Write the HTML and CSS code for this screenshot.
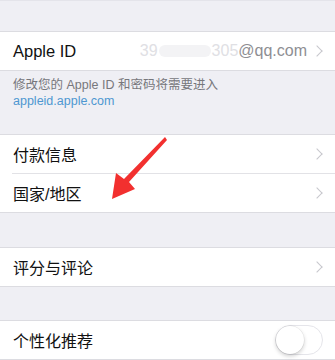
FILE: index.html
```html
<!DOCTYPE html>
<html lang="zh-CN">
<head>
    <meta charset="UTF-8">
    <meta name="viewport" content="width=device-width, initial-scale=1.0">
    <title>Apple ID 设置</title>
    <link rel="stylesheet" href="styles.css">
</head>
<body>

    <div class="page">
        <div class="gap-top"></div>

        <div class="group">
            <div class="cell">
                <span class="label latin">Apple ID</span>
                <span class="value">
                    <span class="hidden-part">39</span><span class="blur"></span><span class="hidden-part">305</span>@qq.com
                </span>
                <span class="chevron"></span>
            </div>
        </div>

        <div class="note">
            <p>修改您的 Apple ID 和密码将需要进入</p>
            <p class="link">appleid.apple.com</p>
        </div>

        <div class="group">
            <div class="cell">
                <span class="label">付款信息</span>
                <span class="chevron"></span>
            </div>
            <div class="cell">
                <span class="label">国家/地区</span>
                <span class="chevron"></span>
            </div>
        </div>

        <div class="gap gap-wide"></div>

        <div class="group">
            <div class="cell">
                <span class="label">评分与评论</span>
                <span class="chevron"></span>
            </div>
        </div>

        <div class="gap"></div>

        <div class="group">
            <div class="cell">
                <span class="label">个性化推荐</span>
                <span class="toggle"><span class="knob"></span></span>
            </div>
        </div>

        <!-- red annotation arrow drawn over the list -->
        <svg class="arrow" width="335" height="360" viewBox="0 0 335 360">
            <path d="M165 137 L167 140 L129 182 L135 189 L112 199 L116 173 L124 179 Z" fill="#f2302f"/>
        </svg>
    </div>

</body>
</html>
```

FILE: styles.css
```css
* {
    margin: 0;
    padding: 0;
    box-sizing: border-box;
}

body {
    font-family: 'Liberation Sans', 'Noto Sans CJK SC', sans-serif;
    background-color: #efeff4;
    color: #111;
    width: 335px;
    height: 360px;
    overflow: hidden;
}

.page {
    position: relative;
}

.gap-top {
    height: 31px;
    border-top: 1px solid #e4e4ea;
}

.gap {
    height: 33px;
}

.gap-wide {
    height: 34px;
}

.group {
    background: #fff;
    border-top: 1px solid #dcdce1;
    border-bottom: 1px solid #dcdce1;
}

.cell {
    display: flex;
    align-items: center;
    height: 38px;
    padding: 0 12px 0 13px;
    position: relative;
}

/* thin line between cells, inset like iOS */
.cell + .cell {
    height: 39px;
    border-top: 1px solid #e2e2e6;
    margin-left: 12px;
    padding-left: 1px;
}

.label {
    flex: 1;
    font-size: 16px;
}

.label.latin {
    font-size: 16.5px;
}

.value {
    font-size: 16px;
    color: #8e8e93;
    margin-right: 6px;
    display: flex;
    align-items: center;
}

.hidden-part {
    color: #e0e0e4;
}

.blur {
    display: inline-block;
    width: 52px;
    height: 12px;
    background: #f3f3f5;
    border-radius: 6px;
    margin: 0 1px;
}

.chevron {
    width: 8px;
    height: 8px;
    border-top: 1.5px solid #c7c7cc;
    border-right: 1.5px solid #c7c7cc;
    transform: rotate(45deg);
    margin-right: 2px;
}

.note {
    padding: 6px 13px 0;
    height: 63px;
    font-size: 12.5px;
    line-height: 16px;
    color: #77777c;
}

.note .link {
    color: #4e97d1;
}

.toggle {
    width: 48px;
    height: 30px;
    border: 1.5px solid #e5e5ea;
    border-radius: 15px;
    background: #fff;
    position: relative;
}

.knob {
    position: absolute;
    top: -0.5px;
    left: -0.5px;
    width: 28px;
    height: 28px;
    border-radius: 50%;
    background: #fff;
    box-shadow: 0 2px 4px rgba(0, 0, 0, 0.2), 0 0 0 0.5px rgba(0, 0, 0, 0.08);
}

.arrow {
    position: absolute;
    left: 0;
    top: 0;
    pointer-events: none;
}
```
